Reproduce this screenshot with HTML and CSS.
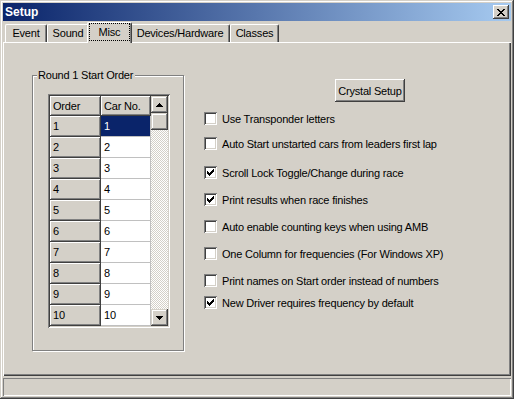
FILE: index.html
```html
<!DOCTYPE html>
<html lang="en">

<head>
    <meta charset="UTF-8">
    <meta name="viewport" content="width=device-width, initial-scale=1.0">
    <title>Setup</title>
    <link rel="stylesheet" href="styles.css">
</head>

<body>
    <div class="window">
        <div class="titlebar">
            <span class="title">Setup</span>
            <button class="close-btn">
                <svg width="8" height="7" viewBox="0 0 8 7" shape-rendering="crispEdges"><path d="M0 0h2v1h-2zM6 0h2v1h-2zM1 1h2v1h-2zM5 1h2v1h-2zM2 2h4v1h-4zM3 3h2v1h-2zM2 4h4v1h-4zM1 5h2v1h-2zM5 5h2v1h-2zM0 6h2v1h-2zM6 6h2v1h-2z" fill="#000"/></svg>
            </button>
        </div>

        <div class="tabs">
            <div class="tab tab-event">Event</div>
            <div class="tab tab-sound">Sound</div>
            <div class="tab tab-misc active"><span class="focus">Misc</span></div>
            <div class="tab tab-devices">Devices/Hardware</div>
            <div class="tab tab-classes">Classes</div>
        </div>

        <div class="panel">
            <div class="group">
                <span class="group-label">Round 1 Start Order</span>
                <div class="grid">
                    <div class="cells">
                        <div class="cell fixed">Order</div>
                        <div class="cell fixed">Car No.</div>
                        <div class="cell fixed">1</div>
                        <div class="cell selected">1</div>
                        <div class="cell fixed">2</div>
                        <div class="cell">2</div>
                        <div class="cell fixed">3</div>
                        <div class="cell">3</div>
                        <div class="cell fixed">4</div>
                        <div class="cell">4</div>
                        <div class="cell fixed">5</div>
                        <div class="cell">5</div>
                        <div class="cell fixed">6</div>
                        <div class="cell">6</div>
                        <div class="cell fixed">7</div>
                        <div class="cell">7</div>
                        <div class="cell fixed">8</div>
                        <div class="cell">8</div>
                        <div class="cell fixed">9</div>
                        <div class="cell">9</div>
                        <div class="cell fixed">10</div>
                        <div class="cell">10</div>
                    </div>
                    <div class="scrollbar">
                        <div class="sb-btn">
                            <svg width="7" height="4" viewBox="0 0 7 4" shape-rendering="crispEdges"><path d="M3 0h1v1h-1zM2 1h3v1h-3zM1 2h5v1h-5zM0 3h7v1h-7z" fill="#000"/></svg>
                        </div>
                        <div class="sb-btn"></div>
                        <div class="sb-track"></div>
                        <div class="sb-btn">
                            <svg width="7" height="4" viewBox="0 0 7 4" shape-rendering="crispEdges"><path d="M0 0h7v1h-7zM1 1h5v1h-5zM2 2h3v1h-3zM3 3h1v1h-1z" fill="#000"/></svg>
                        </div>
                    </div>
                </div>
            </div>

            <div class="options">
                <button class="btn">Crystal Setup</button>
                <label class="opt opt-first"><span class="box"></span>Use Transponder letters</label>
                <label class="opt opt-near"><span class="box"></span>Auto Start unstarted cars from leaders first lap</label>
                <label class="opt opt-far"><span class="box checked"><svg width="9" height="9" viewBox="0 0 9 9" shape-rendering="crispEdges"><path d="M7 1h1v1h-1zM6 2h2v1h-2zM1 3h1v1h-1zM5 3h3v1h-3zM1 4h2v1h-2zM4 4h3v1h-3zM1 5h5v1h-5zM2 6h3v1h-3zM3 7h1v1h-1z" fill="#000"/></svg></span>Scroll Lock Toggle/Change during race</label>
                <label class="opt"><span class="box checked"><svg width="9" height="9" viewBox="0 0 9 9" shape-rendering="crispEdges"><path d="M7 1h1v1h-1zM6 2h2v1h-2zM1 3h1v1h-1zM5 3h3v1h-3zM1 4h2v1h-2zM4 4h3v1h-3zM1 5h5v1h-5zM2 6h3v1h-3zM3 7h1v1h-1z" fill="#000"/></svg></span>Print results when race finishes</label>
                <label class="opt"><span class="box"></span>Auto enable counting keys when using AMB</label>
                <label class="opt"><span class="box"></span>One Column for frequencies (For Windows XP)</label>
                <label class="opt"><span class="box"></span>Print names on Start order instead of numbers</label>
                <label class="opt opt-last"><span class="box checked"><svg width="9" height="9" viewBox="0 0 9 9" shape-rendering="crispEdges"><path d="M7 1h1v1h-1zM6 2h2v1h-2zM1 3h1v1h-1zM5 3h3v1h-3zM1 4h2v1h-2zM4 4h3v1h-3zM1 5h5v1h-5zM2 6h3v1h-3zM3 7h1v1h-1z" fill="#000"/></svg></span>New Driver requires frequency by default</label>
            </div>
        </div>

        <div class="statusbar"></div>
    </div>
</body>

</html>
```

FILE: styles.css
```css
body {
    margin: 0;
    padding: 0;
    font-family: "Liberation Sans", Arial, sans-serif;
    font-size: 11px;
    letter-spacing: -0.2px;
    color: #000;
}

.window {
    width: 514px;
    height: 399px;
    box-sizing: border-box;
    padding: 3px;
    background-color: #d4d0c8;
    box-shadow: inset -1px -1px #404040, inset 1px 1px #d4d0c8,
        inset -2px -2px #808080, inset 2px 2px #fff;
    display: flex;
    flex-direction: column;
}

.titlebar {
    height: 18px;
    flex: 0 0 18px;
    background: linear-gradient(to right, #0a246a, #a6caf0);
    display: flex;
    align-items: center;
    justify-content: space-between;
    padding: 0 2px;
}

.title {
    color: #fff;
    font-weight: bold;
    font-size: 12px;
    letter-spacing: 0;
}

.close-btn {
    width: 16px;
    height: 14px;
    padding: 0;
    border: none;
    background-color: #d4d0c8;
    box-shadow: inset -1px -1px #404040, inset 1px 1px #fff,
        inset -2px -2px #808080;
    display: flex;
    align-items: center;
    justify-content: center;
}

.tabs {
    height: 21px;
    flex: 0 0 21px;
    display: flex;
    align-items: flex-end;
    padding-left: 2px;
}

.tab {
    height: 18px;
    box-sizing: border-box;
    border-left: 1px solid #fff;
    border-top: 1px solid #fff;
    border-right: 1px solid #404040;
    border-radius: 2px 2px 0 0;
    box-shadow: inset -1px 0 #808080;
    background-color: #d4d0c8;
    display: flex;
    align-items: center;
    justify-content: center;
    padding-bottom: 1px;
}

.tab-event { width: 42px; }
.tab-sound { width: 42px; }
.tab-misc { width: 41px; }
.tab-devices { width: 100px; }
.tab-classes { width: 49px; }

.tab.active {
    width: 45px;
    height: 21px;
    margin: 0 -2px -1px;
    position: relative;
    z-index: 1;
    padding: 0 1px 2px 1px;
}

.focus {
    flex: 1;
    align-self: stretch;
    display: flex;
    align-items: center;
    justify-content: center;
    outline: 1px dotted #000;
    outline-offset: -1px;
}

.panel {
    flex: 0 0 334px;
    box-sizing: border-box;
    padding: 1px;
    display: flex;
    align-items: flex-start;
    box-shadow: inset 1px 1px #fff, inset -1px -1px #404040,
        inset -2px -2px #808080;
}

.group {
    position: relative;
    box-sizing: border-box;
    width: 152px;
    height: 276px;
    margin: 32px 0 0 28px;
    border: 1px solid #808080;
    box-shadow: 1px 1px 0 #fff, inset 1px 1px 0 #fff;
}

.group-label {
    position: absolute;
    top: -7px;
    left: 4px;
    padding: 0 2px 0 1px;
    line-height: 13px;
    background-color: #d4d0c8;
}

.grid {
    display: flex;
    width: 122px;
    margin: 18px 0 0 15px;
    padding: 2px;
    box-sizing: border-box;
    box-shadow: inset 1px 1px #808080, inset -1px -1px #fff,
        inset 2px 2px #404040, inset -2px -2px #d4d0c8;
}

.cells {
    display: grid;
    grid-template-columns: 51px 50px;
    grid-template-rows: 20px;
    grid-auto-rows: 21px;
}

.cell {
    box-sizing: border-box;
    background-color: #fff;
    border-right: 1px solid #c0c0c0;
    border-bottom: 1px solid #c0c0c0;
    padding-left: 3px;
    line-height: 20px;
}

.cell.fixed {
    background-color: #d4d0c8;
    border-color: #404040;
    box-shadow: inset 1px 1px #fff, inset -1px -1px #808080;
}

.cell.selected {
    background-color: #0a246a;
    color: #fff;
}

.scrollbar {
    width: 17px;
    display: flex;
    flex-direction: column;
}

.sb-btn {
    height: 17px;
    flex: 0 0 17px;
    background-color: #d4d0c8;
    box-shadow: inset -1px -1px #404040, inset 1px 1px #d4d0c8,
        inset -2px -2px #808080, inset 2px 2px #fff;
    display: flex;
    align-items: center;
    justify-content: center;
}

.sb-track {
    flex: 1;
    background: repeating-conic-gradient(#d4d0c8 0 25%, #fff 0 50%) 0 0 / 2px 2px;
}

.options {
    display: flex;
    flex-direction: column;
    align-items: flex-start;
    margin-left: 20px;
}

.btn {
    width: 70px;
    height: 23px;
    margin: 36px 0 0 131px;
    padding: 0;
    border: none;
    background-color: #d4d0c8;
    font: inherit;
    letter-spacing: inherit;
    color: #000;
    box-shadow: inset -1px -1px #404040, inset 1px 1px #fff,
        inset -2px -2px #808080, inset 2px 2px #d4d0c8;
}

.opt {
    display: flex;
    align-items: center;
    height: 13px;
    margin-top: 14px;
    white-space: nowrap;
}

.opt-first { margin-top: 10px; }
.opt-near { margin-top: 12px; }
.opt-far { margin-top: 16px; }
.opt-last { margin-top: 9px; }

.box {
    width: 13px;
    height: 13px;
    box-sizing: border-box;
    margin-right: 5px;
    padding: 2px;
    background-color: #fff;
    box-shadow: inset 1px 1px #808080, inset -1px -1px #fff,
        inset 2px 2px #404040, inset -2px -2px #d4d0c8;
}

.box svg {
    display: block;
}

.statusbar {
    flex: 0 0 18px;
    margin-top: 2px;
    box-sizing: border-box;
    box-shadow: inset 1px 1px #808080, inset -1px -1px #fff;
}
```
